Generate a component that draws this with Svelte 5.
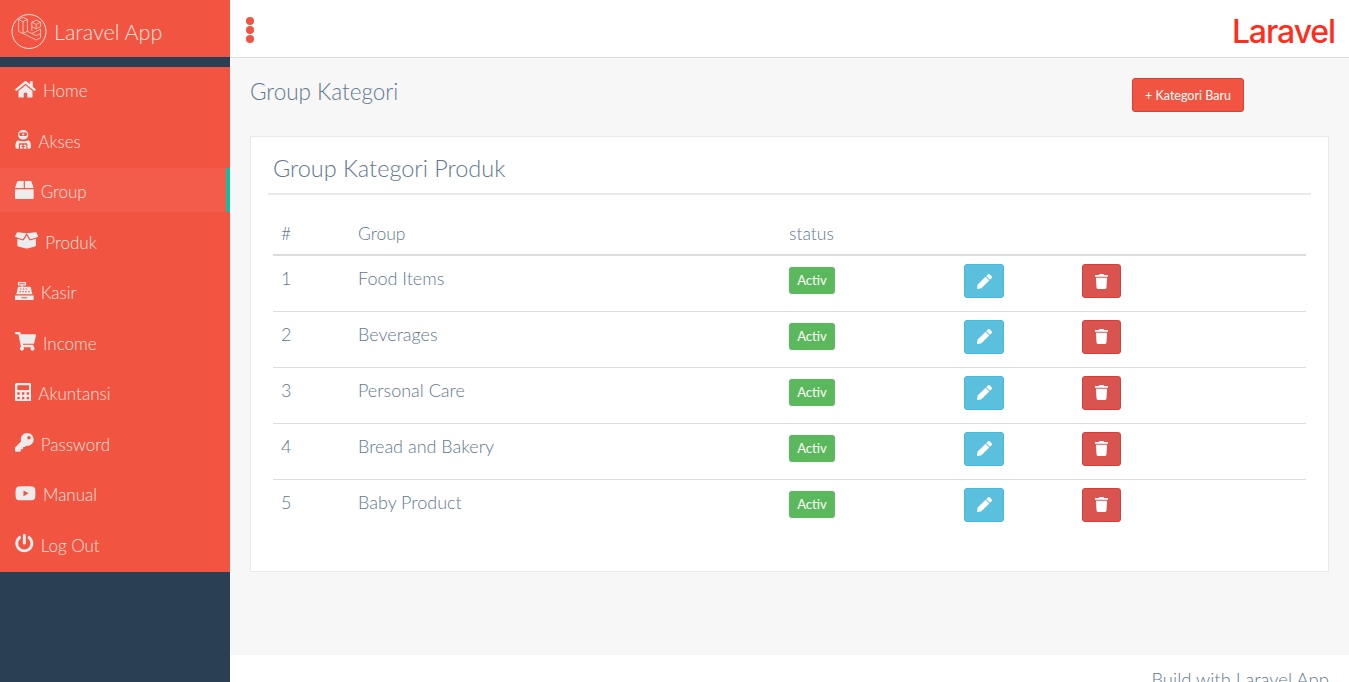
<script>
  // font-awesome style glyphs, w is the viewBox width (height is always 512)
  const icons = {
    home: { w: 576, d: 'M280.37 148.26L96 300.11V464a16 16 0 0 0 16 16l112.06-.29a16 16 0 0 0 15.92-16V368a16 16 0 0 1 16-16h64a16 16 0 0 1 16 16v95.64a16 16 0 0 0 16 16.05L464 480a16 16 0 0 0 16-16V300L295.67 148.26a12.19 12.19 0 0 0-15.3 0zM571.6 251.47L488 182.56V44.05a12 12 0 0 0-12-12h-56a12 12 0 0 0-12 12v72.61L318.47 43a48 48 0 0 0-61 0L4.34 251.47a12 12 0 0 0-1.6 16.9l25.5 31A12 12 0 0 0 45.15 301l235.22-193.74a12.19 12.19 0 0 1 15.3 0L530.9 301a12 12 0 0 0 16.9-1.6l25.5-31a12 12 0 0 0-1.7-16.93z' },
    astronaut: { w: 448, d: 'M224 0C142 0 84 58 84 132c0 72 58 132 140 132s140-60 140-132C364 58 306 0 224 0zM160 68h128c26 0 44 20 44 50s-18 50-44 50H160c-26 0-44-20-44-50s18-50 44-50zM212 84v24h-24v20h24v24h24v-24h24v-20h-24V84zM84 280C34 306 14 352 14 408v72c0 18 14 32 32 32h60V392c0-18 14-30 30-30h176c16 0 30 12 30 30v120h60c18 0 32-14 32-32v-72c0-56-20-102-70-128-36 20-72 28-140 28s-104-8-140-28zM136 404v108h72v-44h-32v-32h32v-32zM240 404v32h32v32h-32v44h72V404z' },
    box: { w: 512, d: 'M509.5 184.6L458.9 32.8C452.4 13.2 434.1 0 413.4 0H272v192h238.7c-.4-2.5-.4-5-1.2-7.4zM240 0H98.6c-20.7 0-39 13.2-45.5 32.8L2.5 184.6c-.8 2.4-.8 4.9-1.2 7.4H240V0zM0 224v240c0 26.5 21.5 48 48 48h416c26.5 0 48-21.5 48-48V224H0z' },
    boxOpen: { w: 640, d: 'M425.7 256c-16.9 0-32.8-9-41.4-23.4L320 126l-64.2 106.6c-8.7 14.5-24.6 23.5-41.5 23.5-4.5 0-9-.6-13.3-1.9L64 215v178c0 14.7 10 27.5 24.2 31l216.2 54.1c10.2 2.5 20.9 2.5 31 0L551.8 424c14.2-3.6 24.2-16.4 24.2-31V215l-137 39.1c-4.3 1.3-8.8 1.9-13.3 1.9zm212.6-112.2L586.8 41c-3.1-6.2-9.8-9.8-16.7-8.9L320 64l91.7 152.1c3.8 6.3 11.4 9.3 18.5 7.3l197.9-56.5c9.9-2.9 14.7-13.9 10.2-23.1zM53.2 41L1.7 143.8c-4.6 9.2.3 20.2 10.1 23l197.9 56.5c7.1 2 14.7-1 18.5-7.3L320 64 69.8 32.1c-6.9-.8-13.5 2.8-16.6 8.9z' },
    register: { w: 512, d: 'M96 0h192c9 0 16 7 16 16v64c0 9-7 16-16 16h-80v32h192c18 0 32 12 36 28l40 180H36L76 156c4-16 18-28 36-28h64V96H96c-9 0-16-7-16-16V16c0-9 7-16 16-16zm16 32v32h160V32zM136 176v32h40v-32zm80 0v32h40v-32zm80 0v32h40v-32zM120 248v32h40v-32zm80 0v32h40v-32zm80 0v32h40v-32zm80 0v32h40v-32zM0 368h512v112c0 18-14 32-32 32H32c-18 0-32-14-32-32zm176 48v32h160v-32z' },
    cart: { w: 576, d: 'M528.12 301.319l47.273-208C578.806 78.301 567.391 64 551.99 64H159.208l-9.166-44.81C147.758 8.021 137.93 0 126.529 0H24C10.745 0 0 10.745 0 24v16c0 13.255 10.745 24 24 24h69.883l70.248 343.435C147.325 417.1 136 435.222 136 456c0 30.928 25.072 56 56 56s56-25.072 56-56c0-15.674-6.447-29.835-16.824-40h209.647C430.447 426.165 424 440.326 424 456c0 30.928 25.072 56 56 56s56-25.072 56-56c0-22.172-12.888-41.332-31.579-50.405l5.517-24.276c3.413-15.018-8.002-29.319-23.403-29.319H218.117l-6.545-32h293.145c11.206 0 20.92-7.754 23.403-18.681z' },
    calc: { w: 448, d: 'M48 0h352c26 0 48 22 48 48v416c0 26-22 48-48 48H48c-26 0-48-22-48-48V48C0 22 22 0 48 0zm16 64v128h320V64zM64 256v64h64v-64zm128 0v64h64v-64zm128 0v64h64v-64zM64 384v64h64v-64zm128 0v64h64v-64zm128 0v64h64v-64z' },
    key: { w: 512, d: 'M512 176.001C512 273.203 433.202 352 336 352c-11.22 0-22.19-1.062-32.827-3.069l-24.012 27.014A23.999 23.999 0 0 1 261.223 384H224v40c0 13.255-10.745 24-24 24h-40v40c0 13.255-10.745 24-24 24H24c-13.255 0-24-10.745-24-24v-78.059c0-6.365 2.529-12.47 7.029-16.971l161.802-161.802C163.108 213.814 160 195.271 160 176 160 78.798 238.797.001 335.999 0 433.488-.001 512 78.511 512 176.001zM336 128c0 26.51 21.49 48 48 48s48-21.49 48-48-21.49-48-48-48-48 21.49-48 48z' },
    youtube: { w: 576, d: 'M549.655 124.083c-6.281-23.65-24.787-42.276-48.284-48.597C458.781 64 288 64 288 64S117.22 64 74.629 75.486c-23.497 6.322-42.003 24.947-48.284 48.597-11.412 42.867-11.412 132.305-11.412 132.305s0 89.438 11.412 132.305c6.281 23.65 24.787 41.5 48.284 47.821C117.22 448 288 448 288 448s170.78 0 213.371-11.486c23.497-6.321 42.003-24.171 48.284-47.821 11.412-42.867 11.412-132.305 11.412-132.305s0-89.438-11.412-132.305zm-317.51 213.508V175.185l142.739 81.205-142.739 81.201z' },
    power: { w: 512, d: 'M400 54.1c63 45 104 118.6 104 201.9 0 136.8-110.8 247.7-247.5 248C120 504.3 8.2 393 8 256.4 7.9 173.1 48.9 99.3 111.8 54.2c11.7-8.3 28-4.8 35 7.7L162.6 90c5.9 10.5 3.1 23.8-6.6 31-41.5 30.8-68 79.6-68 134.9-.1 92.3 74.5 168.1 168 168.1 91.6 0 168.6-74.2 168-169.1-.3-51.8-24.7-101.8-68.1-134-9.7-7.2-12.4-20.5-6.5-30.9l15.8-28.1c7-12.4 23.2-16.1 34.8-7.8zM296 264V24c0-13.3-10.7-24-24-24h-32c-13.3 0-24 10.7-24 24v240c0 13.3 10.7 24 24 24h32c13.3 0 24-10.7 24-24z' }
  };

  const menu = [
    { label: 'Home', icon: icons.home },
    { label: 'Akses', icon: icons.astronaut },
    { label: 'Group', icon: icons.box, active: true },
    { label: 'Produk', icon: icons.boxOpen },
    { label: 'Kasir', icon: icons.register },
    { label: 'Income', icon: icons.cart },
    { label: 'Akuntansi', icon: icons.calc },
    { label: 'Password', icon: icons.key },
    { label: 'Manual', icon: icons.youtube },
    { label: 'Log Out', icon: icons.power }
  ];

  const groups = ['Food Items', 'Beverages', 'Personal Care', 'Bread and Bakery', 'Baby Product'];

  const pencil = 'M497.9 142.1l-46.1 46.1c-4.7 4.7-12.3 4.7-17 0l-111-111c-4.7-4.7-4.7-12.3 0-17l46.1-46.1c18.7-18.7 49.1-18.7 67.9 0l60.1 60.1c18.8 18.7 18.8 49.1 0 67.9zM284.2 99.8L21.6 362.4.4 483.9c-2.9 16.4 11.4 30.6 27.8 27.8l121.5-21.3 262.6-262.6c4.7-4.7 4.7-12.3 0-17l-111-111c-4.8-4.7-12.4-4.7-17.1 0z';
  const trash = 'M432 32H312l-9.4-18.7A24 24 0 0 0 281.1 0H166.8a23.72 23.72 0 0 0-21.4 13.3L136 32H16A16 16 0 0 0 0 48v32a16 16 0 0 0 16 16h416a16 16 0 0 0 16-16V48a16 16 0 0 0-16-16zM53.2 467a48 48 0 0 0 47.9 45h245.8a48 48 0 0 0 47.9-45L416 128H32z';
</script>

<div class="shell">
  <aside class="sidebar">
    <div class="brand">
      <svg class="brand-logo" viewBox="0 0 36 36" fill="none" stroke="currentColor" stroke-width="0.7" stroke-linejoin="round">
        <circle cx="18" cy="17.5" r="17" stroke-width="1" />
        <path transform="translate(-1.2 -3.6) scale(1.1 .95)" d="M8 9.5l4-2.2 4 2.2v12.5l8 4.6 4-2.3v-4.6l-8 4.6M8 9.5v12.6l8 4.5 8 4.5 4-2.3v-4.6M8 9.5l4 2.3 4-2.3M12 11.8v12.5M16 22l-4 2.3M20 12.5l4-2.3 4 2.3v4.6l-4 2.3-4-2.3zM20 12.5l4 2.3 4-2.3M24 14.8v4.6M20 17.1v4.6" />
      </svg>
      <span>Laravel App</span>
    </div>

    <ul class="menu">
      {#each menu as item}
        <li class:active={item.active}>
          <svg class="menu-icon" viewBox="0 0 {item.icon.w} 512" style="width: {(item.icon.w * 18.67) / 512}px">
            <path fill="currentColor" fill-rule="evenodd" d={item.icon.d} />
          </svg>
          <span>{item.label}</span>
        </li>
      {/each}
    </ul>
  </aside>

  <div class="main">
    <header class="topbar">
      <div class="dots"><i></i><i></i><i></i></div>
      <div class="wordmark">Laravel</div>
    </header>

    <main class="content">
      <div class="page-title">
        <h3>Group Kategori</h3>
        <button class="btn-new">+ Kategori Baru</button>
      </div>

      <section class="panel">
        <h2>Group Kategori Produk</h2>
        <table>
          <thead>
            <tr>
              <th class="col-no">#</th>
              <th class="col-name">Group</th>
              <th class="col-status">status</th>
              <th class="col-edit"></th>
              <th></th>
            </tr>
          </thead>
          <tbody>
            {#each groups as group, i}
              <tr>
                <td>{i + 1}</td>
                <td>{group}</td>
                <td><span class="badge">Activ</span></td>
                <td>
                  <button class="btn-icon edit" aria-label="Edit">
                    <svg viewBox="0 0 512 512"><path fill="currentColor" d={pencil} /></svg>
                  </button>
                </td>
                <td>
                  <button class="btn-icon del" aria-label="Hapus">
                    <svg viewBox="0 0 448 512"><path fill="currentColor" d={trash} /></svg>
                  </button>
                </td>
              </tr>
            {/each}
          </tbody>
        </table>
      </section>
    </main>

    <footer class="footer">Build with Laravel App</footer>
  </div>
</div>

<style>
  :global(body) {
    background: #2a3f54;
    color: #62788f;
    font-family: Lato, "Liberation Sans", sans-serif;
    font-weight: 300;
    overflow: hidden;
  }

  .shell {
    display: flex;
    height: 100vh;
    overflow: hidden;
  }

  .sidebar {
    width: 230px;
    flex: none;
    background: #2a3f54;
    color: #f7e3df;
  }

  .brand {
    height: 57px;
    box-sizing: border-box;
    padding: 14px 0 0 11px;
    display: flex;
    align-items: flex-start;
    gap: 7px;
    background: #f15441;
    font-size: 21.5px;
    line-height: 36px;
    color: #fbe3df;
  }

  .brand-logo {
    width: 36px;
    height: 36px;
    flex: none;
  }

  .menu {
    list-style: none;
    margin: 10px 0 0;
    padding: 0;
    background: #f15441;
    height: 505px;
  }

  .menu li {
    height: 44px;
    margin-bottom: 6.5px;
    padding-left: 15px;
    display: flex;
    align-items: center;
    gap: 7px;
    font-size: 17px;
    box-sizing: border-box;
  }

  .menu li span {
    padding-top: 3px;
  }

  .menu li.active {
    background: #f35c4b;
    border-right: 4px solid #1abb9c;
  }

  .menu-icon {
    height: 18.67px;
    flex: none;
    color: #ececec;
  }

  .main {
    flex: 1;
    min-width: 0;
    display: flex;
    flex-direction: column;
    background: #f7f7f7;
  }

  .topbar {
    height: 58px;
    flex: none;
    box-sizing: border-box;
    display: flex;
    justify-content: space-between;
    align-items: flex-start;
    padding: 0 14px 0 16px;
    background: #fff;
    border-bottom: 1px solid #d9dee4;
  }

  .dots {
    display: flex;
    flex-direction: column;
    gap: 1px;
    padding-top: 17px;
  }

  .dots i {
    width: 8px;
    height: 8px;
    border-radius: 50%;
    background: #f15441;
  }

  .wordmark {
    font-family: Inter, Lato, sans-serif;
    font-weight: 500;
    font-size: 32px;
    line-height: 32px;
    padding-top: 16px;
    letter-spacing: -1.1px;
    color: #ff2d20;
  }

  .content {
    flex: 1;
    padding: 20px 20px 0;
  }

  .page-title {
    display: flex;
    justify-content: space-between;
    align-items: flex-start;
    margin-bottom: 24px;
  }

  h3 {
    margin: 0;
    font-size: 22.5px;
    font-weight: 300;
    line-height: 28px;
  }

  .btn-new {
    width: 112px;
    height: 34px;
    margin-right: 85px;
    padding: 0;
    background: #f15441;
    border: 1px solid #d43f3a;
    border-radius: 3px;
    color: #fff;
    font-family: inherit;
    font-weight: 400;
    font-size: 12.5px;
  }

  .panel {
    height: 436px;
    box-sizing: border-box;
    padding: 0 17px;
    background: #fff;
    border: 1px solid #e6e9ed;
  }

  h2 {
    margin: 0;
    height: 58px;
    box-sizing: border-box;
    padding: 15px 0 0 5px;
    border-bottom: 2px solid #e6e9ed;
    font-size: 23.5px;
    font-weight: 300;
    line-height: 32px;
  }

  table {
    width: calc(100% - 10px);
    margin: 17px 5px 0;
    border-collapse: collapse;
    table-layout: fixed;
    font-size: 18px;
  }

  th {
    height: 42px;
    padding: 0 8px;
    font-weight: 300;
    font-size: 17.5px;
    text-align: left;
    border-bottom: 2px solid #ddd;
  }

  .col-no {
    width: 77px;
    box-sizing: border-box;
  }

  .col-name {
    width: 431px;
    box-sizing: border-box;
  }

  .col-status {
    width: 175px;
    box-sizing: border-box;
  }

  .col-edit {
    width: 118px;
    box-sizing: border-box;
  }

  td {
    height: 56px;
    box-sizing: border-box;
    padding: 8px;
    vertical-align: top;
    line-height: 28px;
    border-top: 1px solid #ddd;
  }

  tbody tr:first-child td {
    border-top: 0;
  }

  .badge {
    display: block;
    width: 46px;
    height: 27px;
    margin-top: 3px;
    background: #5cb85c;
    border-radius: 3px;
    color: #fff;
    font-size: 13px;
    font-weight: 400;
    line-height: 26px;
    text-align: center;
  }

  .btn-icon {
    display: flex;
    align-items: center;
    justify-content: center;
    width: 40px;
    height: 34px;
    padding: 0;
    border-radius: 3px;
    color: #fff;
  }

  .edit {
    background: #5bc0de;
    border: 1px solid #46b8da;
  }

  .edit svg {
    width: 15px;
    height: 15px;
  }

  .del {
    width: 39px;
    background: #d9534f;
    border: 1px solid #d43f3a;
  }

  .del svg {
    width: 13px;
    height: 15px;
  }

  .footer {
    height: 27px;
    flex: none;
    box-sizing: border-box;
    padding: 11px 20px 0 0;
    background: #fff;
    text-align: right;
    font-size: 18.5px;
    line-height: 26px;
    overflow: hidden;
  }
</style>
